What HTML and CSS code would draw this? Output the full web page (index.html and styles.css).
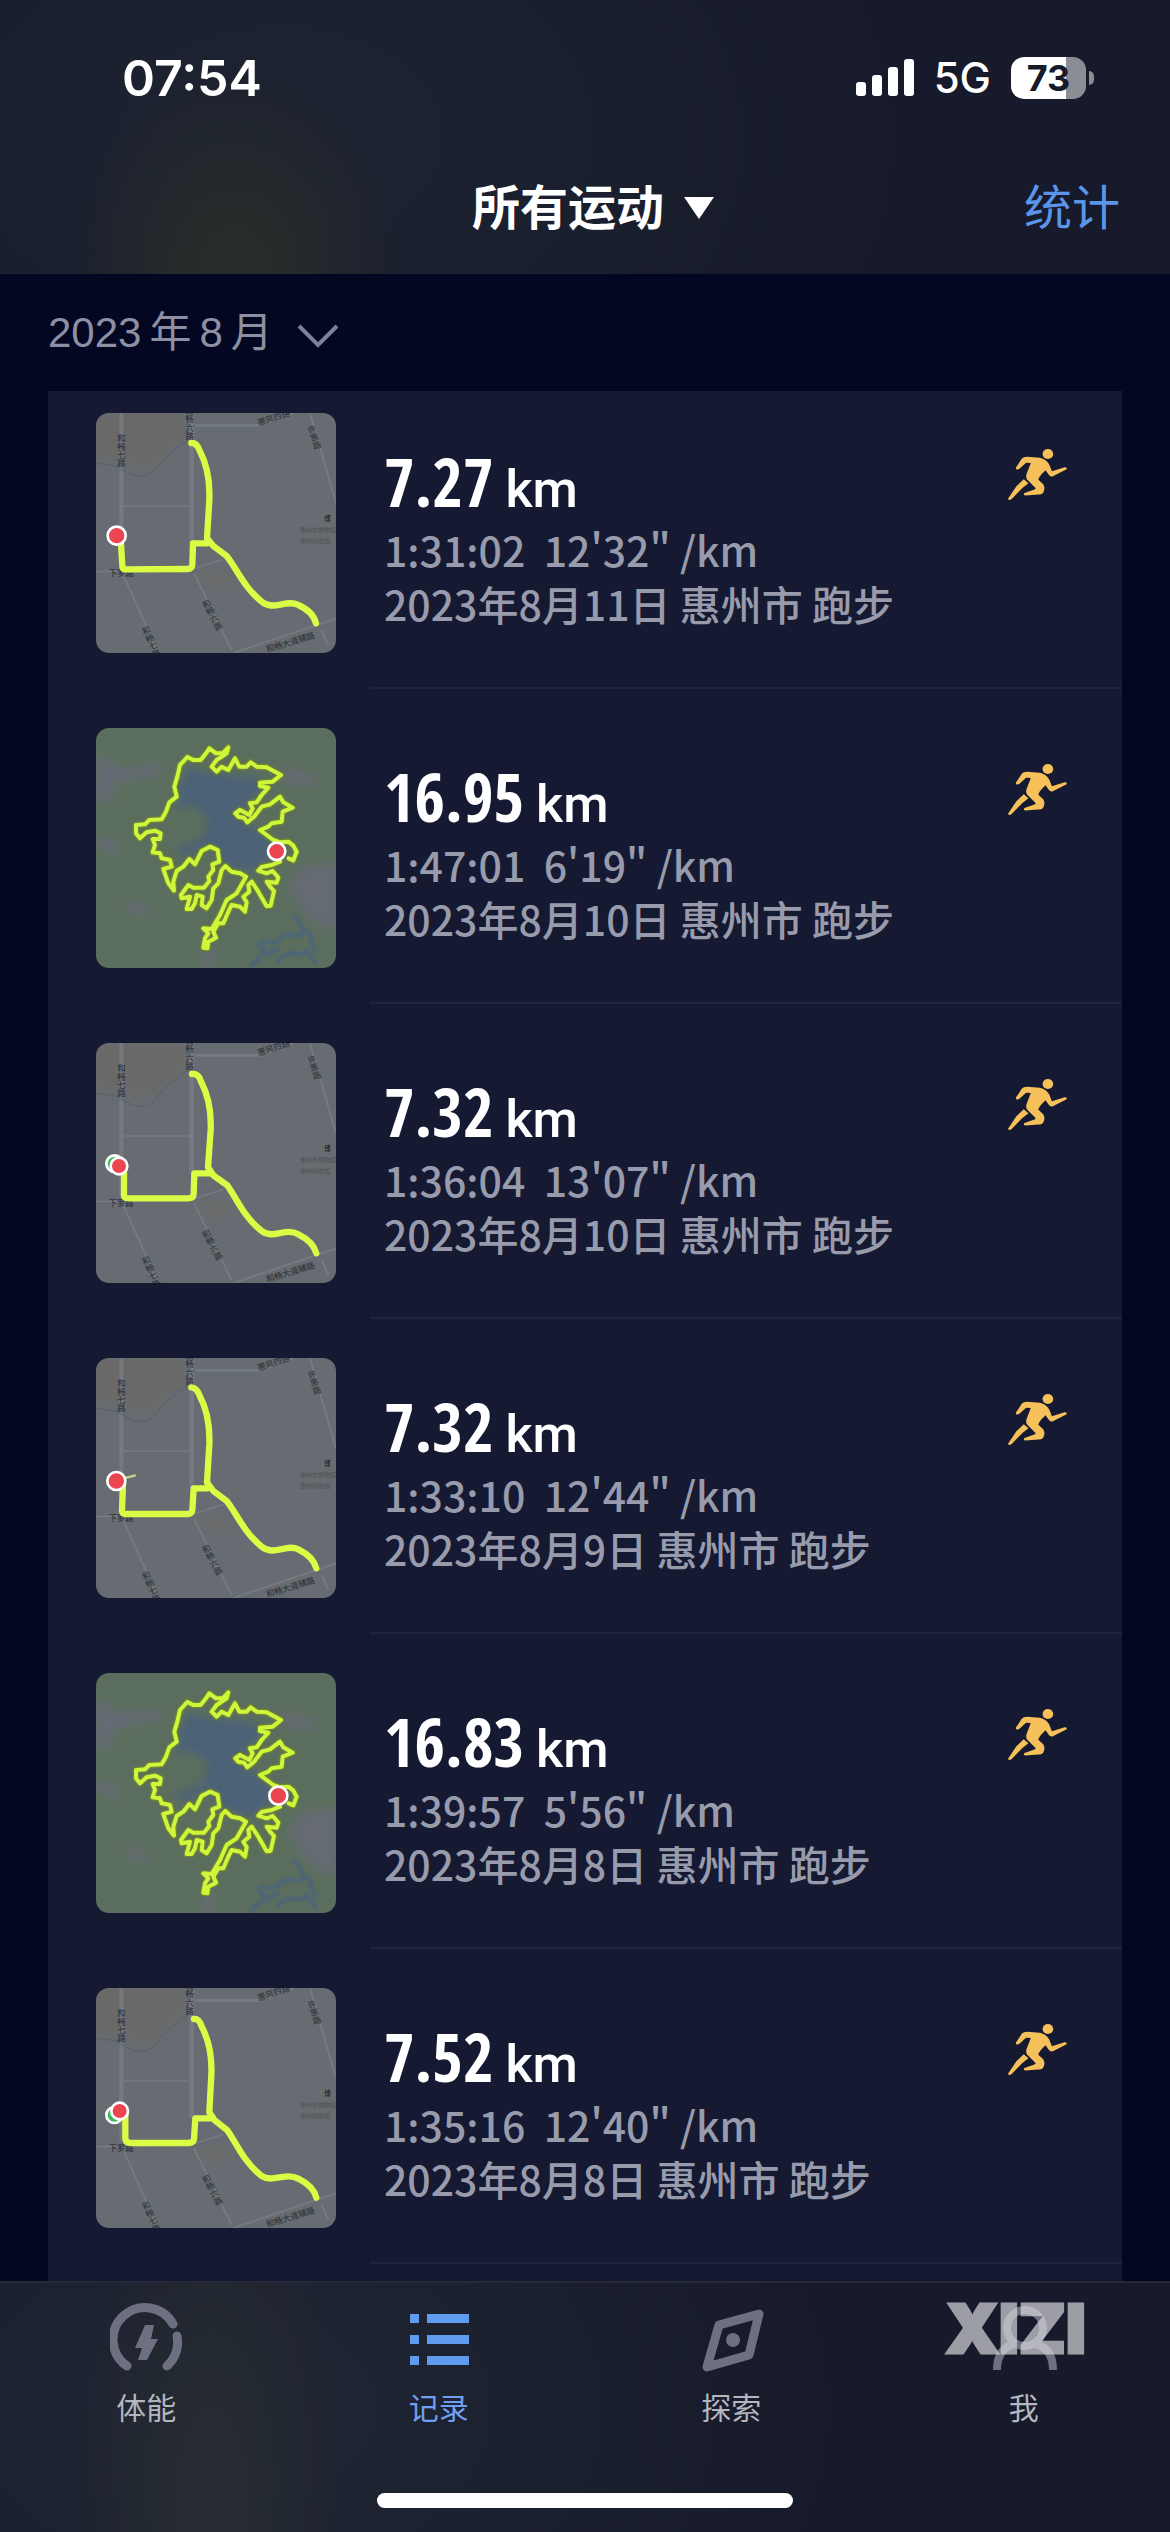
FILE: index.html
```html
<!DOCTYPE html>
<html lang="zh-CN">
<head>
<meta charset="utf-8">
<meta name="viewport" content="width=device-width, initial-scale=1">
<title>运动记录</title>
<link rel="stylesheet" href="styles.css">
</head>
<body>
<svg class="defs" aria-hidden="true">
  <defs>
    <filter id="soft" x="-20%" y="-20%" width="140%" height="140%"><feGaussianBlur stdDeviation="12"/></filter>
    <filter id="water" x="-20%" y="-20%" width="140%" height="140%"><feGaussianBlur stdDeviation="4"/></filter>

    <!-- city streets under the commuter route -->
    <symbol id="streets" viewBox="48 39 720 720">
      <rect x="48" y="39" width="720" height="720" fill="#666c71"/>
      <path d="M48 39H310V110L230 185Q180 205 140 180H48z" fill="#6b6967" filter="url(#soft)"/>
      <path d="M355 530L430 510L460 545L400 560z" fill="#6b6b68" filter="url(#soft)"/>
      <g fill="none" stroke="#747a82" stroke-width="12">
        <path d="M124 39V500"/>
        <path d="M335 39V430" stroke-width="14"/>
        <path d="M345 76H540L640 40" stroke-width="8"/>
        <path d="M126 318H330" stroke-width="5"/>
        <path d="M48 515L330 510L430 478" stroke-width="5"/>
        <path d="M132 530L235 759M342 520L455 750M690 39L768 310" stroke-width="6"/>
        <path d="M460 759L768 655M725 690L745 735" stroke-width="6"/>
      </g>
      <path d="M48 190L110 198Q180 250 220 215Q260 160 325 120" fill="none" stroke="#596067" stroke-width="3"/>
      <g class="street-name">
        <text class="down" x="124" y="102">和畅七路</text>
        <text class="down" x="329" y="20">和畅六路</text>
        <text x="86" y="527">下罗路</text>
        <text transform="translate(536 78) rotate(-18)">惠风四路</text>
        <text class="down" transform="translate(692 76) rotate(-17)">许惠路</text>
        <text class="down" transform="translate(374 600) rotate(-27)">和畅六路</text>
        <text class="down" transform="translate(194 680) rotate(-24)">和畅七路</text>
        <text transform="translate(562 757) rotate(-17)">和畅大道辅路</text>
        <text class="poi" x="732" y="363">博</text>
        <text class="faint" x="660" y="397">惠州市博物馆</text>
        <text class="faint" x="660" y="428">惠州科技馆</text>
      </g>
    </symbol>

    <!-- lake loop: park, water, and the shoreline route -->
    <symbol id="lake" viewBox="48 39 720 720">
      <rect x="48" y="39" width="720" height="720" fill="#5b6e5d"/>
      <g fill="#656b73" filter="url(#soft)">
        <path d="M48 110L120 160L250 145L230 180L110 205L90 270L48 260z"/>
        <path d="M600 150L720 190L690 215L620 205z"/>
        <path d="M768 440L660 460L620 520L700 620L768 650z"/>
        <path d="M48 360L120 380L110 420L48 390zM130 545L230 600L150 600z"/>
        <path d="M360 730L410 680L400 759H360z"/>
      </g>
      <path d="M320 160L400 175L500 185L560 200L520 250L470 290L500 330L540 350L590 400L520 470L430 450L400 400L360 400L310 430L285 400L370 370L385 310L330 270L290 290L300 220z" fill="#4b6277" filter="url(#soft)"/>
      <g fill="none" stroke="#4b647a" stroke-width="12" stroke-linejoin="round" filter="url(#water)">
        <path d="M510 752Q545 730 555 705Q525 690 545 680Q590 690 605 665Q640 655 648 662M590 740Q620 712 640 715Q670 725 680 705L710 748M640 600Q665 625 668 645Q700 655 690 675L710 712M648 662Q670 670 668 645M600 700Q575 705 560 725"/>
      </g>
      <path class="route-edge" d="M595 400L600 382L625 380L640 392L650 410L640 436L626 430M600 440L575 450L545 456L535 467L560 475L578 468L595 488L590 503L560 500L570 515L582 528L572 572L560 574L535 530L515 500L505 510L508 530L490 545L500 562L495 590L480 575L455 570L445 590L430 625L415 625L400 650L408 668L385 680L382 700L370 698L375 670L385 655L370 640L395 642L420 600L440 555L470 535L498 485L480 475L455 470L436 453L425 465L415 505L400 520L395 555L380 580L365 570L368 545L350 540L345 565L335 582L320 582L330 545L305 550L303 540L325 510L340 518L372 518L388 498L385 485L400 465L397 448L418 440L413 405L390 395L365 408L345 448L328 432L310 455L290 468L280 500L282 527L265 505L250 462L275 455L270 435L245 430L240 415L218 412L225 390L218 372L240 372L242 355L225 347L200 352L180 370L168 355L168 330L195 328L208 315L245 313L258 290L268 262L290 245L283 215L292 185L300 150L322 126L340 135L362 135L378 115L388 100L408 115L428 115L445 97L440 115L410 135L395 155L410 170L425 155L445 165L465 130L478 155L500 155L512 142L530 155L560 157L603 180L578 200L540 203L540 213L565 218L545 240L530 262L510 265L518 280L508 300L480 285L466 295L475 305L492 308L502 322L522 305L545 275L570 268L600 245L610 262L638 278L608 290L605 320L575 325L565 335L540 345L560 360L580 375L600 382"/>
      <path class="route" d="M595 400L600 382L625 380L640 392L650 410L640 436L626 430M600 440L575 450L545 456L535 467L560 475L578 468L595 488L590 503L560 500L570 515L582 528L572 572L560 574L535 530L515 500L505 510L508 530L490 545L500 562L495 590L480 575L455 570L445 590L430 625L415 625L400 650L408 668L385 680L382 700L370 698L375 670L385 655L370 640L395 642L420 600L440 555L470 535L498 485L480 475L455 470L436 453L425 465L415 505L400 520L395 555L380 580L365 570L368 545L350 540L345 565L335 582L320 582L330 545L305 550L303 540L325 510L340 518L372 518L388 498L385 485L400 465L397 448L418 440L413 405L390 395L365 408L345 448L328 432L310 455L290 468L280 500L282 527L265 505L250 462L275 455L270 435L245 430L240 415L218 412L225 390L218 372L240 372L242 355L225 347L200 352L180 370L168 355L168 330L195 328L208 315L245 313L258 290L268 262L290 245L283 215L292 185L300 150L322 126L340 135L362 135L378 115L388 100L408 115L428 115L445 97L440 115L410 135L395 155L410 170L425 155L445 165L465 130L478 155L500 155L512 142L530 155L560 157L603 180L578 200L540 203L540 213L565 218L545 240L530 262L510 265L518 280L508 300L480 285L466 295L475 305L492 308L502 322L522 305L545 275L570 268L600 245L610 262L638 278L608 290L605 320L575 325L565 335L540 345L560 360L580 375L600 382"/>
    </symbol>

    <symbol id="runner" viewBox="84 82 182 158">
      <g fill="#f6c05a">
        <ellipse cx="206" cy="100" rx="16" ry="15"/>
        <path d="M112 145Q108 142 114 136L128 114Q133 108 144 108L182 111Q202 116 210 131L218 151L256 139Q264 139 262 145L221 166Q213 169 208 161L199 148L187 160Q180 168 177 176L192 190Q199 200 193 213Q189 221 178 221L139 224Q131 222 136 216L166 206L170 202L146 178Q138 170 143 158L155 127L141 126L122 143Q116 148 112 145z"/>
        <path d="M134 175L148 187L130 201L98 234Q90 240 87 233L112 196z"/>
      </g>
    </symbol>
  </defs>
</svg>

<div class="app">
  <header class="top">
    <div class="status">
      <time class="clock">07:54</time>
      <div class="signals">
        <svg class="bars" width="58" height="38" viewBox="0 0 58 38" fill="#fff" aria-hidden="true">
          <rect x="0" y="23" width="10" height="14" rx="3"/><rect x="16" y="16" width="10" height="21" rx="3"/><rect x="32" y="8" width="10" height="29" rx="3"/><rect x="48" y="0" width="10" height="37" rx="3"/>
        </svg>
        <span class="network">5G</span>
        <span class="battery"><span class="level">73</span></span>
      </div>
    </div>
    <div class="bar">
      <button class="filter" type="button">所有运动
        <svg width="30" height="22" viewBox="0 0 30 22" aria-hidden="true"><path d="M0 0H30L15 22z" fill="#fff"/></svg>
      </button>
      <a class="stats" href="#stats">统计</a>
    </div>
  </header>

  <button class="month" type="button">
    <span>2023</span><span>年</span><span>8</span><span>月</span>
    <svg width="42" height="26" viewBox="0 0 42 26" aria-hidden="true"><path d="M2 3L21 22L40 3" fill="none" stroke="#7f8296" stroke-width="4"/></svg>
  </button>

  <main class="list">
    <article class="run">
      <svg class="map" viewBox="48 39 720 720" role="img" aria-label="路线图">
        <use href="#streets" x="48" y="39" width="720" height="720"/>
        <path class="wide" d="M122 415L127 497Q127 508 138 508L322 507Q336 507 337 495L339 430H382M334 129Q350 128 358 150C385 200 390 250 388 300L381 415L400 438L440 468C470 505 490 560 545 605C580 635 620 595 655 615Q700 635 708 670"/>
        <circle cx="110" cy="407" r="27" class="pin"/>
      </svg>
      <div class="info">
        <h2>7.27<small>km</small></h2>
        <p>1:31:02&nbsp; 12'32" /km</p>
        <p>2023年8月11日 惠州市 跑步</p>
      </div>
      <svg class="sport" aria-hidden="true"><use href="#runner"/></svg>
    </article>

    <article class="run">
      <svg class="map" viewBox="48 39 720 720" role="img" aria-label="路线图">
        <use href="#lake" x="48" y="39" width="720" height="720"/>
        <circle cx="590" cy="409" r="26" class="pin"/>
      </svg>
      <div class="info">
        <h2>16.95<small>km</small></h2>
        <p>1:47:01&nbsp; 6'19" /km</p>
        <p>2023年8月10日 惠州市 跑步</p>
      </div>
      <svg class="sport" aria-hidden="true"><use href="#runner"/></svg>
    </article>

    <article class="run">
      <svg class="map" viewBox="48 39 720 720" role="img" aria-label="路线图">
        <use href="#streets" x="48" y="39" width="720" height="720"/>
        <path class="wide" d="M132 415V495Q132 505 145 505L325 505Q340 505 341 493L343 430H388M336 132Q355 130 362 152C390 205 394 255 392 300L384 412L400 436L442 466C470 505 490 560 545 603C580 630 615 590 655 613Q700 635 709 670"/>
        <circle cx="104" cy="401" r="25" class="start"/>
        <circle cx="117" cy="408" r="25" class="pin"/>
      </svg>
      <div class="info">
        <h2>7.32<small>km</small></h2>
        <p>1:36:04&nbsp; 13'07" /km</p>
        <p>2023年8月10日 惠州市 跑步</p>
      </div>
      <svg class="sport" aria-hidden="true"><use href="#runner"/></svg>
    </article>

    <article class="run">
      <svg class="map" viewBox="48 39 720 720" role="img" aria-label="路线图">
        <use href="#streets" x="48" y="39" width="720" height="720"/>
        <path d="M125 402L167 391" stroke="#bfcf8a" stroke-width="8"/>
        <path class="wide" d="M129 415L126 497Q127 508 140 507L322 507Q336 507 337 495L341 430H382M334 127Q350 128 358 150C385 200 390 250 388 300L381 412L400 438L440 468C470 505 490 560 545 605C580 635 620 595 655 613Q700 635 709 670"/>
        <circle cx="109" cy="408" r="27" class="pin"/>
      </svg>
      <div class="info">
        <h2>7.32<small>km</small></h2>
        <p>1:33:10&nbsp; 12'44" /km</p>
        <p>2023年8月9日 惠州市 跑步</p>
      </div>
      <svg class="sport" aria-hidden="true"><use href="#runner"/></svg>
    </article>

    <article class="run">
      <svg class="map" viewBox="48 39 720 720" role="img" aria-label="路线图">
        <use href="#lake" x="48" y="39" width="720" height="720"/>
        <circle cx="595" cy="407" r="27" class="pin"/>
      </svg>
      <div class="info">
        <h2>16.83<small>km</small></h2>
        <p>1:39:57&nbsp; 5'56" /km</p>
        <p>2023年8月8日 惠州市 跑步</p>
      </div>
      <svg class="sport" aria-hidden="true"><use href="#runner"/></svg>
    </article>

    <article class="run">
      <svg class="map" viewBox="48 39 720 720" role="img" aria-label="路线图">
        <use href="#streets" x="48" y="39" width="720" height="720"/>
        <path class="wide" d="M136 415V490Q136 503 150 504L325 504Q341 504 342 492L346 430H390M342 132Q356 130 364 152C392 205 396 255 394 300L388 412L404 436L442 466C470 505 490 560 545 603C580 625 615 590 655 611Q700 633 709 668"/>
        <circle cx="103" cy="420" r="24" class="start"/>
        <circle cx="119" cy="408" r="25" class="pin"/>
      </svg>
      <div class="info">
        <h2>7.52<small>km</small></h2>
        <p>1:35:16&nbsp; 12'40" /km</p>
        <p>2023年8月8日 惠州市 跑步</p>
      </div>
      <svg class="sport" aria-hidden="true"><use href="#runner"/></svg>
    </article>
  </main>

  <footer class="dock">
    <nav class="tabs">
      <a class="tab" href="#fitness">
        <svg viewBox="0 0 72 72" aria-hidden="true">
          <path d="M17 64A32 32 0 1 1 63 22M67 34A32 32 0 0 1 57 64" fill="none" stroke="#6c7080" stroke-width="9" stroke-linecap="round"/>
          <path d="M35 23H44L41 37H48L37 58H28L32 46H25z" fill="#6c7080"/>
        </svg>
        <span>体能</span>
      </a>
      <a class="tab active" href="#records" aria-current="page">
        <svg viewBox="0 0 72 72" aria-hidden="true">
          <path d="M7 12h9v9h-9zM24 12h42v9h-42zM7 33h9v9h-9zM24 33h42v9h-42zM7 54h9v9h-9zM24 54h42v9h-42z" fill="#5f9bee"/>
        </svg>
        <span>记录</span>
      </a>
      <a class="tab" href="#explore">
        <svg viewBox="0 0 72 72" aria-hidden="true">
          <path d="M24 23L64 12L54 53L12 65z" fill="none" stroke="#6c7080" stroke-width="9" stroke-linejoin="round"/>
          <circle cx="38" cy="38" r="7" fill="#6c7080"/>
        </svg>
        <span>探索</span>
      </a>
      <a class="tab" href="#me">
        <svg viewBox="0 0 72 72" aria-hidden="true">
          <g fill="none" stroke="#6c7080" stroke-width="8">
            <circle cx="37" cy="26" r="18"/>
            <path d="M9 68Q9 46 27 42M47 42Q65 46 65 68"/>
          </g>
        </svg>
        <span>我</span>
        <b class="mark">XIZI</b>
      </a>
    </nav>
    <div class="home"></div>
  </footer>
</div>
</body>
</html>
```
FILE: styles.css
```css
* { box-sizing: border-box; }

body {
  margin: 0;
  background: #030722;
  color: #fff;
  font-family: "Noto Sans CJK SC", sans-serif;
}

h2, p { margin: 0; }
a { color: inherit; text-decoration: none; }
button { border: 0; padding: 0; background: none; color: inherit; font: inherit; }
svg { display: block; flex: none; }
.defs { position: absolute; width: 0; height: 0; }

.app {
  display: flex;
  flex-direction: column;
  min-height: 100vh;
}

/* header */
.top {
  height: 274px;
  background:
    radial-gradient(ellipse 160px 200px at 20% 100%, #262c2a 25%, transparent),
    radial-gradient(ellipse 620px 420px at 24% 50%, #1d2230 20%, transparent),
    #161a2a;
}

.status {
  display: flex;
  justify-content: space-between;
  align-items: center;
  height: 156px;
  padding: 0 84px 0 122px;
}

.clock {
  font: 600 50px/60px Inter, sans-serif;
}

.signals {
  display: flex;
  align-items: center;
  gap: 20px;
}

.network {
  font: 500 42px/50px Inter, sans-serif;
}

.battery {
  position: relative;
  width: 75px;
  height: 42px;
  border-radius: 13px;
  background: linear-gradient(90deg, #fff 73%, #8b8d95 73%);
}

.battery::after {
  content: "";
  position: absolute;
  left: 78px;
  top: 14px;
  width: 5px;
  height: 14px;
  border-radius: 0 5px 5px 0;
  background: #8b8d95;
}

.level {
  display: block;
  color: #161a2a;
  font: 700 36px/42px Inter, sans-serif;
  text-align: center;
}

.bar {
  display: grid;
  grid-template-columns: 1fr auto 1fr;
  align-items: center;
  height: 96px;
  padding: 0 50px;
  font-size: 48px;
  line-height: 72px;
}

.filter {
  display: flex;
  grid-column: 2;
  align-items: center;
  gap: 20px;
  padding-left: 16px;
  font-weight: 700;
}

.filter svg { margin-top: 8px; }

.stats {
  justify-self: end;
  color: #5b95ea;
}

/* month picker */
.month {
  display: flex;
  align-items: center;
  gap: 8px;
  height: 117px;
  padding: 0 48px;
  color: #8d90a2;
  font: 42px/60px "Liberation Sans", "Noto Sans CJK SC", sans-serif;
}

.month svg {
  margin: 6px 0 0 16px;
}

/* activity list */
.list {
  flex: 1;
  margin: 0 48px;
  background: #151932;
}

.run {
  display: flex;
  align-items: flex-start;
  height: 315px;
  padding: 39px 54px 0 48px;
  background: linear-gradient(#212539, #212539) 322px 100% / 100% 2px no-repeat;
}

.run:first-child {
  height: 298px;
  padding-top: 22px;
}

.map {
  width: 240px;
  height: 240px;
  border-radius: 13px;
}

.street-name text { fill: #34373c; font-size: 25px; font-weight: 500; }
.street-name .down { writing-mode: vertical-rl; }
.street-name .poi { fill: #202226; font-size: 20px; }
.street-name .faint { fill: #50545a; font-size: 18px; }

.route, .route-edge, .wide { fill: none; stroke-linecap: round; stroke-linejoin: round; }
.route { stroke: #d0f63c; stroke-width: 12px; }
.route-edge { stroke: #6d8535; stroke-width: 20px; }
.wide { stroke: #dcfb45; stroke-width: 19px; }
.pin { fill: #ec4450; stroke: #fff; stroke-width: 8px; }
.start { fill: #3dbb62; stroke: #fff; stroke-width: 8px; }

.info {
  flex: 1;
  padding: 30px 0 0 48px;
}

.info h2 {
  height: 79px;
  font: 700 66px/76px "Open Sans Condensed", "Roboto Condensed", sans-serif;
}

.info small {
  margin-left: 12px;
  font: 500 52px/52px Roboto, sans-serif;
}

.info p {
  color: #989bac;
  font-size: 41px;
  font-weight: 500;
  line-height: 54px;
}

.sport {
  width: 61px;
  height: 53px;
  margin-top: 35px;
}

/* tab bar */
.dock {
  height: 251px;
  padding-top: 19px;
  border-top: 2px solid #252938;
  background:
    radial-gradient(ellipse 130px 340px at 18% 90%, #252b30 30%, transparent),
    radial-gradient(ellipse 600px 420px at 20% 50%, #1f2432 20%, transparent),
    #161a2a;
}

.tabs {
  display: grid;
  grid-template-columns: repeat(4, 1fr);
}

.tab {
  position: relative;
  display: flex;
  flex-direction: column;
  align-items: center;
  gap: 14px;
  color: #b4b6c0;
  font-size: 30px;
  line-height: 36px;
}

.tab svg { width: 72px; height: 72px; }
.active { color: #6f9ff0; }

.mark {
  position: absolute;
  top: 0;
  left: 68px;
  color: #d7d5da;
  font: 900 68px/52px Inter, sans-serif;
  -webkit-text-stroke: 3px #d7d5da;
  stroke-linejoin: round;
  opacity: .7;
}

.home {
  width: 416px;
  height: 15px;
  margin: 69px auto 0;
  border-radius: 8px;
  background: #fff;
}
```
